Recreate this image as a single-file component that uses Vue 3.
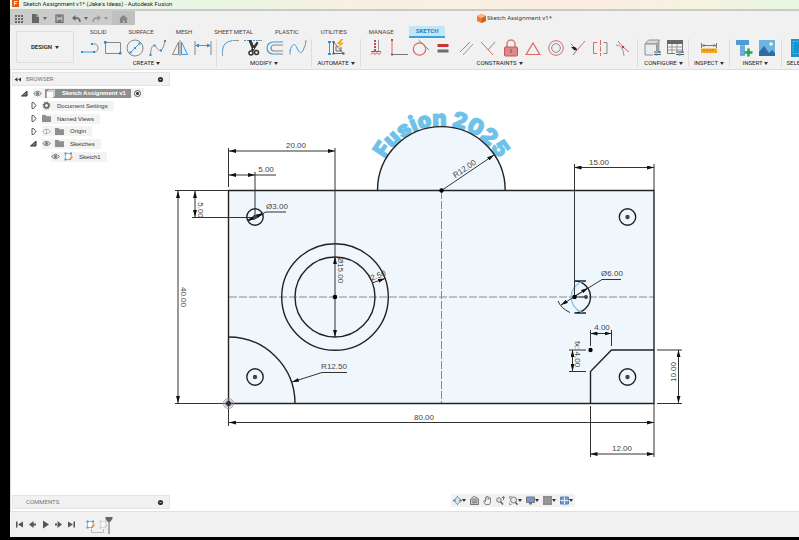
<script setup>
const tabs = ['SOLID', 'SURFACE', 'MESH', 'SHEET METAL', 'PLASTIC', 'UTILITIES', 'MANAGE', 'SKETCH']

const groups = [
  { key: 'create', label: 'CREATE', tools: ['line', 'rect', 'circle', 'spline', 'mirror', 'dimension'] },
  { key: 'modify', label: 'MODIFY', tools: ['fillet', 'trim', 'offset', 'blend'] },
  { key: 'automate', label: 'AUTOMATE', tools: ['automate'] },
  {
    key: 'constraints',
    label: 'CONSTRAINTS',
    tools: ['fix', 'horizontal', 'tangent', 'equal', 'parallel', 'perpendicular', 'lock', 'polygon', 'concentric', 'midpoint', 'symmetry', 'curvature'],
  },
  { key: 'configure', label: 'CONFIGURE', tools: ['config', 'table'] },
  { key: 'inspect', label: 'INSPECT', tools: ['measure'] },
  { key: 'insert', label: 'INSERT', tools: ['bolt', 'image'] },
  { key: 'select', label: 'SELECT', tools: ['select'] },
]

const tree = [
  { text: 'Document Settings', level: 1, open: false, icons: ['gear'] },
  { text: 'Named Views', level: 1, open: false, icons: ['folder'] },
  { text: 'Origin', level: 1, open: false, icons: ['eyeoff', 'folder'] },
  { text: 'Sketches', level: 1, open: true, icons: ['eye', 'folder'] },
  { text: 'Sketch1', level: 2, open: null, icons: ['eye', 'sketch'] },
]

const playback = ['first', 'prev', 'play', 'next', 'last']

const navTools = [
  { icon: 'orbit', menu: true },
  { icon: 'look', menu: false },
  { icon: 'pan', menu: false },
  { icon: 'zoom', menu: false },
  { icon: 'fit', menu: true },
  { icon: 'display', menu: true },
  { icon: 'grid', menu: true },
  { icon: 'views', menu: true },
]

const holes = [
  [255, 217],
  [627.5, 217],
  [255, 377],
  [627.5, 377],
]

const arrows = [
  'M229 151H335', 'M229 175H255', 'M195 191V217', 'M178 191V403', 'M335 257V337',
  'M229 422.5H654', 'M590.5 454H654', 'M678.5 350V403', 'M574.5 167.5H654',
  'M590.5 333.5H611.5', 'M572.5 350V371',
]

const extensions = [
  'M228.5 148V187', 'M335 148V260', 'M255 172V217', 'M255 175H276', 'M192 217.5H255',
  'M175 190.5H228', 'M175 403.5H228', 'M228.5 403V426', 'M654 403V457', 'M590.5 406V457',
  'M657 350H682', 'M657 403.5H682', 'M574.5 164V297', 'M654 164V190',
  'M590.5 330V346', 'M611.5 330V346', 'M569 350H586', 'M569 371.5H586',
]

const labels = [
  { t: '20.00', x: 296, y: 148, r: 0 },
  { t: '5.00', x: 266, y: 172, r: 0 },
  { t: '5.00', x: 198, y: 210, r: 90 },
  { t: '40.00', x: 181, y: 297, r: 90 },
  { t: 'Ø3.00', x: 277, y: 209, r: 0 },
  { t: 'Ø15.00', x: 338, y: 270, r: 90 },
  { t: '2.50', x: 379, y: 278, r: -20 },
  { t: 'R12.50', x: 334, y: 369, r: 0 },
  { t: 'R12.00', x: 466, y: 171, r: -34 },
  { t: '80.00', x: 424, y: 420, r: 0 },
  { t: '12.00', x: 622, y: 451, r: 0 },
  { t: '10.00', x: 676, y: 372, r: -90 },
  { t: '15.00', x: 599, y: 165, r: 0 },
  { t: 'Ø6.00', x: 612, y: 276, r: 0 },
  { t: '4.00', x: 602, y: 330, r: 0 },
  { t: 'fx: 4.00', x: 575, y: 354, r: 90 },
]
</script>

<template>
  <svg class="sprite" aria-hidden="true">
    <symbol id="line" viewBox="0 0 18 18"><path d="M1 13H13" stroke="#3b9be0" fill="none" /><path d="M11 5h1.500a4 4 0 0 1 1 8" stroke="#888" fill="none" /><path d="M0 12h2v2H0zM10 4h2v2h-2zM12 12h2v2h-2z" fill="#2f8fd8" /></symbol>
    <symbol id="rect" viewBox="0 0 18 18"><path d="M1.500 3.500h15v11h-15z" fill="none" stroke="#888" /><path d="M0 2h2.500v2.500H0zM15 13h2.500v2.500H15z" fill="#2f8fd8" /></symbol>
    <symbol id="circle" viewBox="0 0 18 18"><circle cx="9" cy="9" r="8" fill="none" stroke="#888" /><path d="M4.500 13.500l9-9" stroke="#3b9be0" /><path d="M3.500 12.500h2v2h-2zM8 8h2v2H8zM12.500 3.500h2v2h-2z" fill="#2f8fd8" /></symbol>
    <symbol id="spline" viewBox="0 0 18 18"><path d="M1.500 16C2 8 4 4 7 8s6 7 9-6" fill="none" stroke="#888" /><path d="M.5 15h2v2h-2zM4.500 5.500h2v2h-2zM11 10.500h2v2h-2zM15 1h2v2h-2z" fill="#2f8fd8" /></symbol>
    <symbol id="mirror" viewBox="0 0 18 18"><path d="M9 1v16" stroke="#888" /><path d="M7.500 3v12.500h-6z" fill="none" stroke="#888" /><path d="M10.500 3v12.500h6z" fill="#e2f1fb" stroke="#3b9be0" /></symbol>
    <symbol id="dimension" viewBox="0 0 18 18"><path d="M1 2v14M17 2v14" stroke="#888" /><path d="M2 6.500h14" stroke="#3b9be0" /><path d="M1 6.500l4-2v4zM17 6.500l-4-2v4z" fill="#2f8fd8" /></symbol>
    <symbol id="fillet" viewBox="0 0 18 18"><path d="M1.500 17v-5M12 1.500h6" stroke="#999" fill="none" /><path d="M1.500 12q0-9 10-10.500" fill="none" stroke="#3b9be0" /></symbol>
    <symbol id="trim" viewBox="0 0 18 18"><path d="M0 1.500h13" stroke="#3b9be0" stroke-dasharray="2 1" /><path d="M13 1.500h5" stroke="#999" /><path d="M5 1.500l2 0 3.500 8-1.500 2zM14 4l-1-1-5.500 8 1.500 1z" fill="#333" stroke="#333" /><circle cx="7" cy="14" r="2" fill="none" stroke="#333" stroke-width="1.500" /><circle cx="12.500" cy="13.500" r="2" fill="none" stroke="#333" stroke-width="1.500" /></symbol>
    <symbol id="offset" viewBox="0 0 18 18"><path d="M17 3H7a6 6 0 0 0 0 12h10" fill="none" stroke="#3b9be0" stroke-width="1.200" /><path d="M17 6H8a3 3 0 0 0 0 6h9" fill="none" stroke="#888" stroke-width="1.200" /></symbol>
    <symbol id="blend" viewBox="0 0 18 18"><path d="M1 15.500V11" fill="none" stroke="#888" /><path d="M1 12C3 4 6 4 8 9s5 7 7 0" fill="none" stroke="#3b9be0" /><path d="M15 9q2-3 2-8" fill="none" stroke="#888" /></symbol>
    <symbol id="automate" viewBox="0 0 18 18"><path d="M2.500 3v12" stroke="#3b9be0" /><path d="M1 2h3v2H1zM1 14h3v2H1z" fill="#2f8fd8" /><path d="M6.500 3v11.500h10zM9 7v5h5V8" fill="none" stroke="#666" /><path d="M5.500 13.500h2v2h-2zM15.500 13.500h2v2h-2zM5.500 2h2v2h-2z" fill="#555" /><path d="M14 0l-4.500 5h3l-2 4.500 6.500-6h-3.500l3-3.500z" fill="#fba919" /></symbol>
    <symbol id="fix" viewBox="0 0 18 18"><path d="M8 1v11" stroke="#d0454c" stroke-dasharray="2 1" stroke-width="2" /><path d="M11.500 1v11" stroke="#999" /><path d="M4 12.500h10" stroke="#d0454c" /><path d="M4 15.500l2-2 2 2 2-2 2 2 2-2" stroke="#d0454c" fill="none" /></symbol>
    <symbol id="horizontal" viewBox="0 0 18 18"><path d="M2 1v15" stroke="#d66" /><path d="M2 15.500h16" stroke="#777" /><path d="M1 0h2v2H1zM1 14.500h2v2H1z" fill="#d0454c" /></symbol>
    <symbol id="tangent" viewBox="0 0 18 18"><circle cx="7.500" cy="10" r="6.200" fill="none" stroke="#d66" stroke-width="1.200" /><path d="M6.500 1L17 11" stroke="#888" /></symbol>
    <symbol id="equal" viewBox="0 0 18 18"><path d="M3.500 5h11v3h-11z" fill="#c8343c" /><path d="M3.500 10.500h11v3h-11z" fill="#6c6c6c" /></symbol>
    <symbol id="parallel" viewBox="0 0 18 18"><path d="M3 13L13 3" stroke="#d66" /><path d="M6 16L16 5" stroke="#999" /></symbol>
    <symbol id="perpendicular" viewBox="0 0 18 18"><path d="M2 3l12 13" stroke="#d66" /><path d="M9 11l7-8" stroke="#888" /></symbol>
    <symbol id="lock" viewBox="0 0 18 18"><path d="M5 8V5a4 4 0 0 1 8 0v3" fill="none" stroke="#d57b80" stroke-width="1.500" /><rect x="2.500" y="8" width="13" height="9" rx="1" fill="#dd8a8e" stroke="#c9545a" /><path d="M9 10v4" stroke="#b8383f" /></symbol>
    <symbol id="polygon" viewBox="0 0 18 18"><path d="M9 4l6.800 11.500h-13.600z" fill="none" stroke="#d66" stroke-width="1.200" /></symbol>
    <symbol id="concentric" viewBox="0 0 18 18"><circle cx="9" cy="9" r="7.300" fill="none" stroke="#d66" /><circle cx="9" cy="9" r="4.300" fill="none" stroke="#888" /></symbol>
    <symbol id="midpoint" viewBox="0 0 18 18"><path d="M9 10l7-8" stroke="#d66" /><path d="M2 5l4 4M8.500 10.500l-4.500 5.500" stroke="#777" fill="none" /><path d="M2 8h4l2.500 2.500-3 1z" fill="#222" /></symbol>
    <symbol id="symmetry" viewBox="0 0 18 18"><path d="M9.500 1v16" stroke="#d66" stroke-dasharray="5 1.500" /><path d="M6 3.500H2.500v11H6" stroke="#d66" fill="none" /><path d="M12.500 3.500H16v11h-3.500" stroke="#888" fill="none" /></symbol>
    <symbol id="curvature" viewBox="0 0 18 18"><path d="M4 2q3 4 5 6l6 5" fill="none" stroke="#d66" /><path d="M2 6q7 0 8 11" fill="none" stroke="#999" /><circle cx="9" cy="8" r="1.200" fill="#c33" /></symbol>
    <symbol id="config" viewBox="0 0 18 18"><path d="M2 5l3.500-4h11l-3 4z" fill="#d9dcdf" stroke="#8b9094" /><path d="M2 5h11.500v11H2z" fill="#e9ebed" stroke="#8b9094" /><path d="M13.500 5l3-4v11l-3 4z" fill="#9fa4a8" /><path d="M10 12h8v5h-8z" fill="#f0f0f0" /><path d="M11 13h7M11 15.500h7" stroke="#555" /><path d="M15 12h2v2h-2zM12.500 14.500h2v2h-2z" fill="#2f8fd8" /></symbol>
    <symbol id="table" viewBox="0 0 18 18"><path d="M1.500 1.500h15v13h-15z" fill="#f5f5f5" stroke="#777" /><path d="M1 1h16v4H1z" fill="#666" /><path d="M2 8h14M2 11h14M6 5v9M11 5v9" stroke="#999" /><path d="M9 12h9v5H9z" fill="#f0f0f0" /><path d="M10 13h8M10 15.500h8" stroke="#555" /><path d="M15 12h2v2h-2zM12.500 14.500h2v2h-2z" fill="#2f8fd8" /></symbol>
    <symbol id="measure" viewBox="0 0 18 18"><path d="M1.500 4v5M16.500 4v5M2 6.500h14" stroke="#777" /><path d="M1.500 6.500l3-1.500v3zM16.500 6.500l-3-1.500v3z" fill="#777" /><path d="M1 9.500h16V14H1z" fill="#f5a81c" /><path d="M4 10v2M7 10v2M10 10v2M13 10v2" stroke="#b87a10" /></symbol>
    <symbol id="bolt" viewBox="0 0 18 18"><path d="M1 1h13v5H1z" fill="#4f9ad2" /><path d="M5 6h5v11H5z" fill="#7bb5dd" /><path d="M5 9h5M5 12h5M5 15h5" stroke="#4f9ad2" /><path d="M13.500 9.500v8M9.500 13.500h8" stroke="#1fa84a" stroke-width="2.500" /></symbol>
    <symbol id="image" viewBox="0 0 18 18"><path d="M1 1h16v16H1z" fill="#6db3e4" /><path d="M1 13l5-6 5 7 3-3 3 3v3H1z" fill="#2d6e9e" /><circle cx="13" cy="5" r="1.800" fill="#fff6c8" /></symbol>
    <symbol id="select" viewBox="0 0 18 18"><path d="M0 0h18v18H0z" fill="#1493d6" /><path d="M2 2.500h14v12H2z" fill="none" stroke="#53c7b0" stroke-dasharray="2 1" /></symbol>

    <symbol id="apps" viewBox="0 0 9 9"><path d="M1 1h2v2H1zM4 1h2v2H4zM7 1h2v2H7zM1 4h2v2H1zM4 4h2v2H4zM7 4h2v2H7zM1 7h2v2H1zM4 7h2v2H4zM7 7h2v2H7z" fill="#666" /></symbol>
    <symbol id="file" viewBox="0 0 9 9"><path d="M1 0h4.500v3H8v6H1z" fill="#666" /><path d="M6 0l2 2.500H6z" fill="#888" /></symbol>
    <symbol id="save" viewBox="0 0 9 9"><path d="M1 1h7v7.500H1z" fill="none" stroke="#666" stroke-width="1.200" /><path d="M2.500 1h4v2.500h-4zM2.500 5.500h4v3h-4z" fill="#777" /></symbol>
    <symbol id="undo" viewBox="0 0 9 9"><path d="M2 4h3q3 .5 3 4" fill="none" stroke="#666" stroke-width="1.400" /><path d="M0 4l3.500-3v6z" fill="#666" /></symbol>
    <symbol id="home" viewBox="0 0 9 9"><path d="M0 5l4.500-4L9 5H8v4H1V5z" fill="#858585" /><path d="M4 6.500h1.500V9H4z" fill="#bbb" /></symbol>
    <symbol id="fusion" viewBox="0 0 9 9"><path d="M0 0h9v9H0z" fill="#e8590c" /><path d="M3 7V2h4M3 4.500h3" fill="none" stroke="#fff" stroke-width="1.200" /></symbol>
    <symbol id="cube" viewBox="0 0 9 9"><path d="M4.500 0L9 2v5L4.500 9 0 7V2z" fill="#ee7a2d" /><path d="M4.500 0L9 2 4.500 4.200 0 2z" fill="#ffb27a" /><path d="M4.500 4.200L9 2v5L4.500 9z" fill="#d3601a" /></symbol>

    <symbol id="collapse" viewBox="0 0 9 9"><path d="M4.500 2.500v4L1.500 4.500zM8 2.500v4L5 4.500z" fill="#333" /></symbol>
    <symbol id="minus" viewBox="0 0 9 9"><circle cx="4.500" cy="4.500" r="2.600" fill="#333" /><path d="M3.500 4.500h2" stroke="#bbb" stroke-width=".8" /></symbol>
    <symbol id="opened" viewBox="0 0 9 9"><path d="M7 2v5H1.500z" fill="#777" stroke="#333" /></symbol>
    <symbol id="closed" viewBox="0 0 9 9"><path d="M3 1.500v6h1.500l2.500-3-2.500-3z" fill="#fff" stroke="#555" /></symbol>
    <symbol id="eye" viewBox="0 0 9 9"><path d="M.5 4.500q4-4.500 8 0-4 4.500-8 0z" fill="#ddd" stroke="#888" /><circle cx="4.500" cy="4.500" r="1.500" fill="#777" /></symbol>
    <symbol id="eyeoff" viewBox="0 0 9 9"><path d="M.5 4.500q4-4.500 8 0-4 4.500-8 0z" fill="#f5f5f5" stroke="#b5b5b5" /><path d="M4.500 2v5" stroke="#b5b5b5" /></symbol>
    <symbol id="gear" viewBox="0 0 9 9"><circle cx="4.500" cy="4.500" r="3.200" fill="none" stroke="#777" stroke-dasharray="1.300 1.200" stroke-width="1.400" /><circle cx="4.500" cy="4.500" r="2.200" fill="none" stroke="#666" stroke-width="1.400" /></symbol>
    <symbol id="folder" viewBox="0 0 9 9"><path d="M0 1h3.500l1 1.200H9V8H0z" fill="#8f8f8f" /></symbol>
    <symbol id="sketch" viewBox="0 0 9 9"><path d="M1.500 1.500h5.500v6H1.500z" fill="#fff" stroke="#8aa5bb" stroke-width=".8" /><path d="M.5.5h2v2h-2zM6 .5h2v2H6zM.5 6.500h2v2h-2z" fill="#4a9bd5" /><path d="M5 8l3.500-3.500" stroke="#f08a2a" stroke-width="1.500" /></symbol>
    <symbol id="part" viewBox="0 0 9 9"><path d="M1 3l2-2h6v5.500L7 8.500H1z" fill="#ccc" stroke="#eee" stroke-width=".6" /><path d="M1 3h6v5.500H1z" fill="#fff" /></symbol>

    <symbol id="first" viewBox="0 0 9 9"><path d="M1 1.500h1.500v6H1zM8 1.500v6l-5-3z" fill="#555" /></symbol>
    <symbol id="prev" viewBox="0 0 9 9"><path d="M5.500 1v7L1 4.500zM5 3.500h3v2H5z" fill="#555" /></symbol>
    <symbol id="play" viewBox="0 0 9 9"><path d="M2 .5l6 4-6 4z" fill="#555" /></symbol>
    <symbol id="next" viewBox="0 0 9 9"><path d="M3.500 1v7L8 4.500zM1 3.500h3v2H1z" fill="#555" /></symbol>
    <symbol id="last" viewBox="0 0 9 9"><path d="M6.500 1.500H8v6H6.500zM1 1.500v6l5-3z" fill="#555" /></symbol>

    <symbol id="orbit" viewBox="0 0 9 9"><path d="M4.500 0v9M0 4.500h9" stroke="#777" /><ellipse cx="4.500" cy="4.500" rx="4" ry="2" fill="none" stroke="#888" stroke-width=".8" /><ellipse cx="4.500" cy="4.500" rx="2" ry="3.500" fill="#d8ecf8" stroke="#5aa5d8" stroke-width=".8" /></symbol>
    <symbol id="look" viewBox="0 0 9 9"><path d="M.5 3h8v5.500h-8z" fill="#c9c9c9" stroke="#777" /><path d="M1.500 2L4 .5 7.500 2M2 5h5M2 6.700h5" stroke="#777" fill="none" /></symbol>
    <symbol id="pan" viewBox="0 0 9 9"><path d="M2.500 8.500L.5 5l.8-.6L2.500 5.500V1.500h1V.5h1.300v.7h1.200V2h1.500v4l-1 2.500z" fill="#f4f4f4" stroke="#777" stroke-width=".9" /><path d="M4 1.500V4M5.700 1.500V4" stroke="#777" stroke-width=".7" /></symbol>
    <symbol id="zoom" viewBox="0 0 9 9"><circle cx="3" cy="4" r="2.300" fill="#dceaf5" stroke="#777" /><path d="M4.500 5.700L7 8.500" stroke="#555" stroke-width="1.300" /><path d="M7.500 0v4M6 1.500h3" stroke="#777" /></symbol>
    <symbol id="fit" viewBox="0 0 9 9"><path d="M.5 2.500v-2h2M.5 6.500v2h2" stroke="#999" fill="none" /><circle cx="4.500" cy="4" r="3" fill="#dceaf5" stroke="#777" /><path d="M6.500 6.300L8.500 8.700" stroke="#444" stroke-width="1.300" /></symbol>
    <symbol id="display" viewBox="0 0 9 9"><path d="M.5 1h8v5.500h-8z" fill="#6f9bd2" stroke="#777" /><path d="M3 7h3v1.500H3z" fill="#777" /></symbol>
    <symbol id="grid" viewBox="0 0 9 9"><path d="M0 0h9v9H0z" fill="#888" /><path d="M0 3h9M0 6h9M3 0v9M6 0v9" stroke="#aaa" stroke-width=".7" /></symbol>
    <symbol id="views" viewBox="0 0 9 9"><path d="M.5 1h8v7h-8z" fill="#6f9bd2" stroke="#5a7eae" /><path d="M4.500 1v7M.5 4.500h8" stroke="#e8f0fa" /></symbol>
  </svg>

  <div class="app">
    <header class="titlebar">
      <svg class="ico"><use href="#fusion" /></svg>
      <span>Sketch Assignment v1* (Jake's Ideas) - Autodesk Fusion</span>
    </header>

    <div class="docbar">
      <div class="quick">
        <button aria-label="Data panel"><svg class="ico"><use href="#apps" /></svg></button>
        <button class="drop" aria-label="File"><svg class="ico"><use href="#file" /></svg><i class="caret"></i></button>
        <button aria-label="Save"><svg class="ico"><use href="#save" /></svg></button>
        <button class="drop" aria-label="Undo"><svg class="ico"><use href="#undo" /></svg><i class="caret"></i></button>
        <button class="drop redo" aria-label="Redo"><svg class="ico flip"><use href="#undo" /></svg><i class="caret"></i></button>
        <button class="home" aria-label="Home"><svg class="ico"><use href="#home" /></svg></button>
      </div>
      <div class="doctitle"><svg class="ico"><use href="#cube" /></svg><span>Sketch Assignment v1*</span></div>
    </div>

    <div class="ribbon">
      <button class="design">DESIGN <i class="caret"></i></button>
      <div class="tools">
        <nav class="tabs">
          <button v-for="t in tabs" :key="t" :class="{ active: t === 'SKETCH' }">{{ t }}</button>
        </nav>
        <div class="groups">
          <section v-for="g in groups" :key="g.key" class="group" :class="g.key">
            <div class="icons">
              <button v-for="n in g.tools" :key="n" :aria-label="n"><svg class="tool"><use :href="'#' + n" /></svg></button>
            </div>
            <button class="glabel">{{ g.label }} <i class="caret"></i></button>
          </section>
        </div>
      </div>
    </div>

    <main class="canvas">
      <svg class="drawing" viewBox="11 70 788 441" role="img" aria-label="Sketch">
        <defs>
          <marker id="arrow" viewBox="0 0 7 4" refX="7" refY="2" markerWidth="7" markerHeight="4" markerUnits="userSpaceOnUse" orient="auto-start-reverse">
            <path d="M0 0L7 2 0 4z" fill="#111" />
          </marker>
          <path id="textarc" d="M377 190.500A64.500 64.500 0 0 1 506 190.500" />
        </defs>
        <path class="face" d="M228.500 190.500H377.500A63.800 63.800 0 0 1 505.200 190.500H654V403.500H228.500z" />
        <text class="arctext"><textPath href="#textarc" startOffset="50%">Fusion 2025</textPath></text>
        <path class="center" d="M441.500 191V403M229 297H654" />
        <g class="edge">
          <path d="M228.500 190.500H654V403.500H228.500zM377.500 190.500A63.800 63.800 0 0 1 505.200 190.500" />
          <circle cx="335" cy="297" r="40" />
          <circle cx="335" cy="297" r="53.300" />
          <path d="M228.500 337A66.500 66.500 0 0 1 295 403.500" />
          <path d="M654 350H611.500L590.500 371.500V403.500" />
          <path d="M574.500 281H586M574.500 313H586M574.500 281A16 16 0 0 1 574.500 313" />
          <circle v-for="(h, i) in holes" :key="i" :cx="h[0]" :cy="h[1]" r="8.200" />
        </g>
        <path class="loose" d="M582 281.500A16.500 16.500 0 0 0 582 312.500" />
        <g class="ext"><path v-for="d in extensions" :key="d" :d="d" /></g>
        <g class="dim">
          <path v-for="d in arrows" :key="d" :d="d" marker-start="url(#arrow)" marker-end="url(#arrow)" />
          <path d="M441.500 190.500L494 155" marker-end="url(#arrow)" />
          <path d="M347 372.500H322L292 382" marker-end="url(#arrow)" />
          <path d="M372 283L385 278.500" marker-end="url(#arrow)" />
          <path d="M621 279.500H602L561 305" marker-end="url(#arrow)" />
          <path d="M575 296L588 288" marker-end="url(#arrow)" />
          <path d="M286 212H266L255 217" />
          <path d="M248 220.500L263 213.500" stroke-width="2" marker-start="url(#arrow)" marker-end="url(#arrow)" />
          <path d="M574.500 297H586M558 301Q561 308.500 570 312.500" />
        </g>
        <g class="dots">
          <circle cx="441.500" cy="190.500" r="2.200" /><circle cx="335" cy="297" r="2.300" />
          <circle cx="574.500" cy="297" r="2.200" /><circle cx="590.500" cy="350" r="2.200" />
          <circle cx="586" cy="297" r="2" class="soft" />
          <circle v-for="(h, i) in holes" :key="i" :cx="h[0]" :cy="h[1]" r="2.200" class="soft" />
        </g>
        <g class="origin"><circle cx="228.500" cy="403.500" r="5" /><circle cx="228.500" cy="403.500" r="3.200" /><circle cx="228.500" cy="403.500" r="2" class="pt" /></g>
        <g class="labels">
          <text v-for="(l, i) in labels" :key="i" :transform="`translate(${l.x} ${l.y}) rotate(${l.r})`">{{ l.t }}</text>
        </g>
      </svg>

      <div class="overlay">
        <aside class="browser">
          <div class="panelhead">
            <svg class="ico"><use href="#collapse" /></svg><span>BROWSER</span>
            <button aria-label="Browser options"><svg class="ico"><use href="#minus" /></svg></button>
          </div>
          <ul class="tree">
            <li class="level0">
              <svg class="ico"><use href="#opened" /></svg>
              <div class="node">
                <svg class="ico"><use href="#eye" /></svg>
                <span class="root"><svg class="ico"><use href="#part" /></svg>Sketch Assignment v1</span>
                <input type="radio" checked aria-label="Activate component" />
              </div>
            </li>
            <li v-for="n in tree" :key="n.text" :class="'level' + n.level">
              <svg v-if="n.open !== null" class="ico"><use :href="n.open ? '#opened' : '#closed'" /></svg>
              <div class="node">
                <svg v-for="k in n.icons" :key="k" class="ico"><use :href="'#' + k" /></svg>
                <span class="name">{{ n.text }}</span>
              </div>
            </li>
          </ul>
        </aside>
        <div class="bottom">
          <div class="panelhead comments">
            <span>COMMENTS</span>
            <button aria-label="Comment options"><svg class="ico"><use href="#minus" /></svg></button>
          </div>
          <div class="navbar">
            <button v-for="n in navTools" :key="n.icon" :aria-label="n.icon">
              <svg class="ico"><use :href="'#' + n.icon" /></svg><i v-if="n.menu" class="caret"></i>
            </button>
          </div>
        </div>
      </div>
    </main>

    <footer class="timeline">
      <button v-for="p in playback" :key="p" :aria-label="p"><svg class="ico"><use :href="'#' + p" /></svg></button>
      <svg class="history" viewBox="0 0 30 20">
        <use href="#sketch" x="1" y="3" width="9" height="9" />
        <use href="#sketch" x="14" y="3" width="9" height="9" opacity=".35" />
        <path d="M6.500 12v3.500h12V12" fill="none" stroke="#bbb" />
        <path d="M20.500 0h7v2l-2.500 3h-2l-2.500-3z" fill="#666" /><path d="M24 3v14" stroke="#666" />
      </svg>
    </footer>
  </div>
</template>

<style>
body { margin: 0; background: #000; }
</style>

<style scoped>
.sprite { display: none; }
.app {
  box-sizing: border-box;
  display: flex;
  flex-direction: column;
  min-height: 100vh;
  padding: 0 0 3px 10px;
  background: #000;
  color: #444;
  font: 6px/8px "Liberation Sans", Arial, sans-serif;
  overflow: hidden;
}
button { border: 0; padding: 0; margin: 0; background: none; color: inherit; font: inherit; display: flex; align-items: center; justify-content: center; white-space: nowrap; }
.ico { display: block; flex: none; width: 9px; height: 9px; }
.caret { flex: none; width: 0; height: 0; border: 2px solid transparent; border-top: 3px solid #333; border-bottom: 0; }

.titlebar {
  display: flex; align-items: flex-start; gap: 3px; height: 9px; padding-left: 1px; overflow: hidden;
  background: linear-gradient(90deg, #edf5ee 0%, #e8f7e4 25%, #f8f0e2 42%, #fbeee2 75%, #f5f3df 88%, #e6f7e2 100%);
  color: #222; font-family: Roboto, sans-serif; white-space: nowrap; line-height: 7px;
}
.titlebar .ico { height: 7px; }
.docbar { display: flex; height: 14px; border-top: 2px solid #cacaca; background: #f1f1f1; }
.quick { display: flex; align-items: center; background: #cbcbcb; padding-left: 4px; gap: 8px; }
.quick .drop { gap: 3px; }
.quick .caret { border-top-color: #666; }
.quick .redo { opacity: .5; margin-left: -4px; }
.flip { transform: scaleX(-1); }
.quick .home { align-self: stretch; width: 23px; background: #c0c0c0; margin-left: -4px; }
.doctitle { display: flex; align-items: center; gap: 1px; margin-left: 342px; color: #333; font-family: "Noto Sans", sans-serif; white-space: nowrap; }

.ribbon { display: flex; height: 44px; background: #f1f1f1; border-bottom: 1px solid #ddd; overflow: hidden; font-family: Roboto, sans-serif; }
.design { flex: none; gap: 3px; box-sizing: border-box; width: 58px; height: 32px; margin: 6px 5px 0 6px; border: 1px solid #ddd; border-radius: 2px; font-weight: 700; color: #333; }
.tools { flex: 1; min-width: 0; }
.tabs { display: flex; gap: 8px; padding: 1px 0 0 4px; }
.tabs button { flex: none; height: 12px; padding: 0 7px; box-sizing: border-box; }
.tabs .active { background: #c3e5f6; border-bottom: 2px solid #34a6de; color: #1c86c4; font-weight: 700; }
.groups { display: flex; padding-top: 1px; }
.group { flex: none; box-sizing: border-box; border-right: 1px solid #dcdcdc; height: 28px; }
.icons { display: grid; grid-auto-flow: column; grid-auto-columns: 1fr; }
.tool { display: block; width: 18px; height: 18px; }
.glabel { width: 100%; gap: 2px; height: 10px; margin-top: 1px; color: #222; }
.create { width: 138px; padding-right: 2px; }
.modify { width: 95px; padding: 0 2px; }
.automate { width: 49px; }
.constraints { width: 277px; padding: 0 3px 0 4px; }
.configure { width: 51px; padding: 0 2px 0 3px; }
.inspect { width: 41px; }
.insert { width: 52px; padding: 0 3px; }
.select { width: 37px; }

.canvas { flex: 1; display: grid; background: #fff; border-left: 1px solid #d8d8d8; }
.canvas > * { grid-area: 1 / 1; min-width: 0; }
.drawing { display: block; width: 100%; height: 100%; }
.face { fill: #eff7fd; }
.edge { fill: none; stroke: #222; stroke-width: 1.400; }
.center { stroke: #888; stroke-width: 1; stroke-dasharray: 8 2; }
.loose { fill: none; stroke: #79c5ee; stroke-width: 1.300; }
.ext, .dim { fill: none; stroke: #333; stroke-width: 1; }
.dots { fill: #000; }
.soft { fill: #444; }
.origin { fill: none; stroke: #999; }
.pt { fill: #33275c; stroke: #222; }
.labels { font: 8px "Liberation Sans", Arial, sans-serif; fill: #444; text-anchor: middle; }
.arctext { font: 900 22px Inter, "Liberation Sans", sans-serif; fill: #6ec2e9; stroke: #6ec2e9; stroke-width: 1; text-anchor: middle; }

.overlay { display: flex; flex-direction: column; justify-content: space-between; padding: 2px 0 2px 1px; }
.panelhead { box-sizing: border-box; display: flex; align-items: center; gap: 4px; width: 158px; height: 14px; padding: 0 4px 0 0; background: #f1f1f1; border: 1px solid #e4e4e4; color: #777; font-family: Roboto, sans-serif; }
.panelhead button { margin-left: auto; }
.comments { padding-left: 13px; }
.tree { list-style: none; margin: 1px 0 0; padding: 0; display: grid; grid-auto-rows: 1fr; height: 76px; }
.tree li { display: flex; align-items: center; gap: 4px; }
.level0 { padding-left: 8px; }
.level1 { padding-left: 17px; }
.level2 { padding-left: 39px; }
.node { display: flex; align-items: center; gap: 4px; height: 10px; padding: 0 6px 0 0; background: #f3f3f3; white-space: nowrap; color: #333; }
.level0 .node { gap: 3px; padding-right: 3px; }
.name { padding-left: 2px; }
.root { display: flex; align-items: center; gap: 7px; height: 9px; padding: 0 5px 0 1px; background: #8f8f8f; color: #fff; font-weight: 700; }
.node input { appearance: none; box-sizing: border-box; width: 7px; height: 7px; margin: 0; border: 1px solid #555; border-radius: 50%; background: radial-gradient(circle, #333 0 1px, #fff 2px); }

.bottom { display: flex; align-items: flex-start; }
.navbar { display: flex; align-items: center; gap: 4px; height: 13px; margin-left: 281px; margin-top: -1px; padding: 0 2px; background: #f1f1f1; }

.timeline { display: flex; align-items: flex-start; gap: 4px; height: 26px; box-sizing: border-box; padding: 5px 0 0 5px; background: #f1f1f1; border-top: 1px solid #e0e0e0; }
.timeline button { margin-top: 3px; }
.history { width: 30px; height: 20px; margin-left: 5px; }
</style>
